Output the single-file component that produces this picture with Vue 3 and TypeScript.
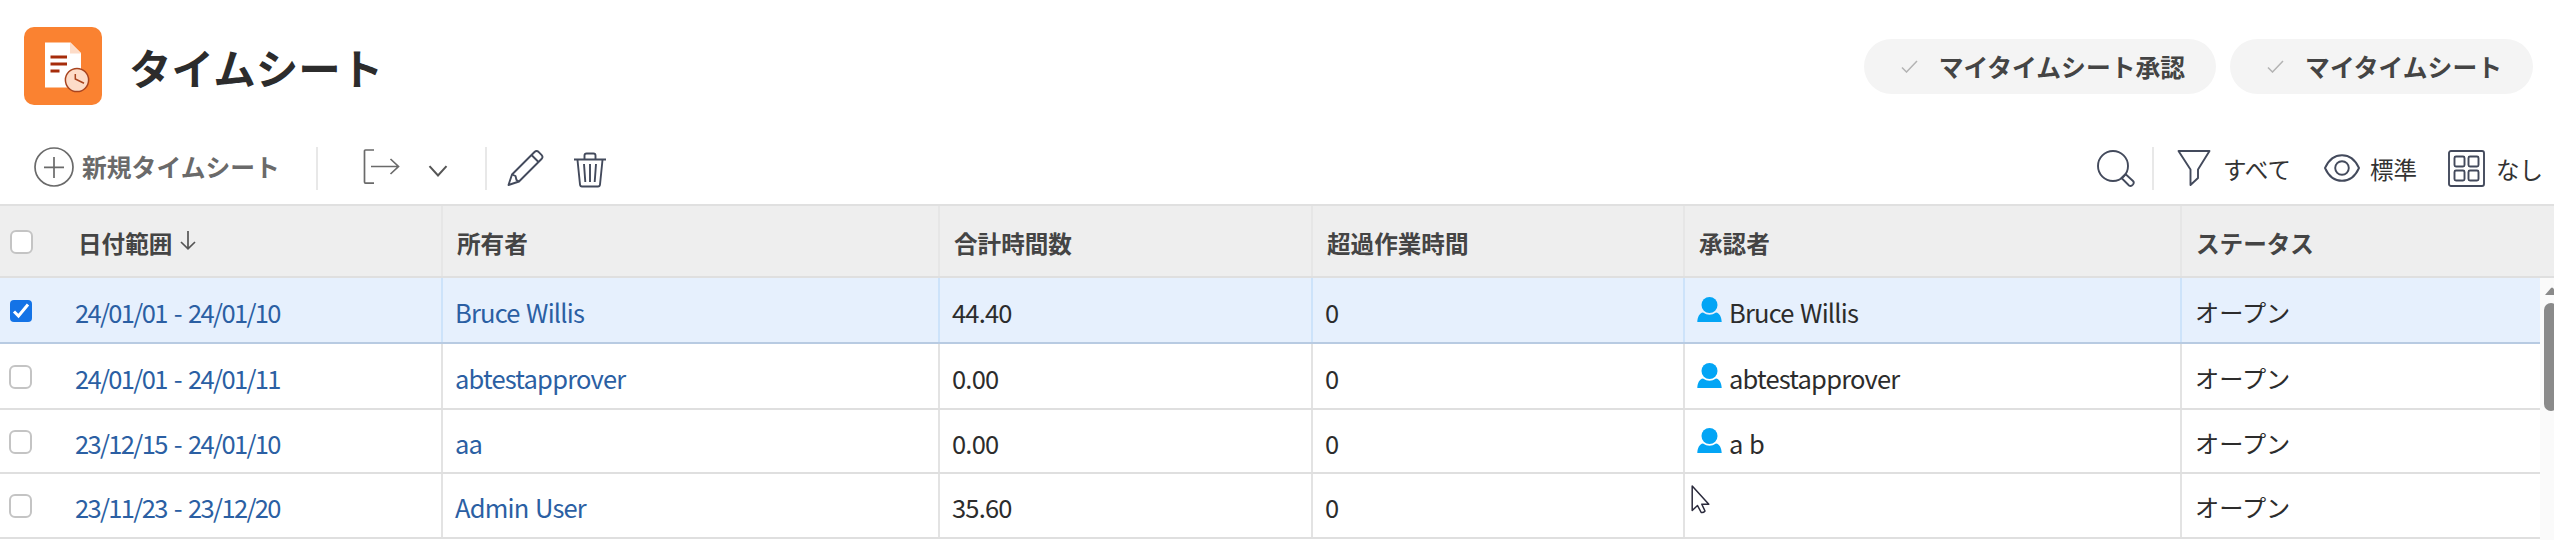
<script setup lang="ts">
interface Sheet {
  range: string
  owner: string
  hours: string
  overtime: string
  approver: string
  status: string
  selected: boolean
}

const columns: string[] = ['所有者', '合計時間数', '超過作業時間', '承認者', 'ステータス']
const filters: string[] = ['マイタイムシート承認', 'マイタイムシート']

const sheets: Sheet[] = [
  { range: '24/01/01 - 24/01/10', owner: 'Bruce Willis', hours: '44.40', overtime: '0', approver: 'Bruce Willis', status: 'オープン', selected: true },
  { range: '24/01/01 - 24/01/11', owner: 'abtestapprover', hours: '0.00', overtime: '0', approver: 'abtestapprover', status: 'オープン', selected: false },
  { range: '23/12/15 - 24/01/10', owner: 'aa', hours: '0.00', overtime: '0', approver: 'a b', status: 'オープン', selected: false },
  { range: '23/11/23 - 23/12/20', owner: 'Admin User', hours: '35.60', overtime: '0', approver: '', status: 'オープン', selected: false },
]
</script>

<template>
  <main class="page">
    <header class="title-bar">
      <svg class="app-icon" width="78" height="78" viewBox="0 0 78 78">
        <rect width="78" height="78" rx="10" fill="#fa8231" />
        <path d="M21 15.500H46.500L57 26V60.500H21Z" fill="#fff" />
        <path d="M46 15.500L57 26.500H46Z" fill="#fddcc8" />
        <path d="M26.500 30H43M26.500 37H43M26.500 44H35.500" stroke="#a62c0b" stroke-width="3.200" />
        <circle cx="53" cy="53" r="11.600" fill="#fddcc8" stroke="#a8441f" stroke-width="1.500" />
        <path d="M51.300 47V52L60 56.200" fill="none" stroke="#a8441f" stroke-width="1.500" />
      </svg>
      <h1>タイムシート</h1>
      <nav class="pills">
        <button v-for="name in filters" :key="name" class="pill">
          <svg width="17" height="13" viewBox="0 0 17 13"><path d="M1 7.500L5.500 12L16 1" fill="none" stroke="#b3b3b3" stroke-width="1.500" /></svg>
          <span>{{ name }}</span>
        </button>
      </nav>
    </header>

    <section class="toolbar">
      <svg class="plus" width="40" height="40" viewBox="0 0 40 40" fill="none" stroke="#6a6a6a" stroke-width="1.700">
        <circle cx="20" cy="20" r="19" />
        <path d="M10 20.300H30M20 10V31" />
      </svg>
      <span class="new-label">新規タイムシート</span>
      <i class="rule rule-a"></i>
      <svg class="export" width="38" height="38" viewBox="0 0 38 38" fill="none" stroke="#6a6a6a" stroke-width="1.700">
        <path d="M11 2H2.500Q1.500 2 1.500 3V34Q1.500 35.200 2.500 35.200H11" />
        <path d="M8 18.500H35.500M27.500 11L35.500 18.500L27.500 26" />
      </svg>
      <svg class="chevron" width="20" height="12" viewBox="0 0 20 12"><path d="M1.500 1.200L10 10.500L18.500 1.200" fill="none" stroke="#555" stroke-width="2" /></svg>
      <i class="rule rule-b"></i>
      <svg class="pencil" width="38" height="38" viewBox="0 0 38 38" fill="none" stroke="#434a5c" stroke-width="1.900" stroke-linejoin="round">
        <path d="M1.500 36L5 25.500L27.500 3Q29.500 1 31.500 2.800L34.500 5.800Q36.500 8 34.500 10L12 32.500Z" />
        <path d="M24.500 6L31.500 13M5 25.500L8.500 27L9.500 31L12 32.500" />
      </svg>
      <svg class="trash" width="32" height="36" viewBox="0 0 32 36" fill="none" stroke="#434a5c" stroke-width="1.900" stroke-linejoin="round">
        <path d="M0 7.500H32M10.500 7V3.500Q10.500 1.500 12.500 1.500H19.500Q21.500 1.500 21.500 3.500V7M3.500 8L6 32.500Q6.200 34.500 8 34.500H24Q25.800 34.500 26 32.500L28.500 8" />
        <path d="M10 12L11.300 30M16 12V30M22 12L20.700 30" />
      </svg>
      <div class="views">
        <svg class="search" width="38" height="38" viewBox="0 0 38 38" fill="none" stroke="#434a5c" stroke-width="1.900">
          <circle cx="16" cy="16" r="15" />
          <path d="M25.500 27L28.500 24L36 31Q37.500 32.500 36 34.500Q34 37 32 35.500L24.500 28Z" />
        </svg>
        <i class="rule rule-c"></i>
        <svg class="funnel" width="34" height="38" viewBox="0 0 34 38" fill="none" stroke="#434a5c" stroke-width="1.900" stroke-linejoin="round">
          <path d="M1.500 2H32.500L21 20.500V29L13.500 36V20.500Z" />
        </svg>
        <span class="view-label all">すべて</span>
        <svg class="eye" width="36" height="28" viewBox="0 0 36 28" fill="none" stroke="#434a5c" stroke-width="1.900">
          <path d="M1 14C5 5 11 1.200 18 1.200S31 5 35 14C31 23 25 26.800 18 26.800S5 23 1 14Z" />
          <circle cx="18" cy="14" r="6.800" />
        </svg>
        <span class="view-label standard">標準</span>
        <svg class="grid-icon" width="37" height="37" viewBox="0 0 37 37" fill="none" stroke="#434a5c" stroke-width="1.900">
          <rect x="1" y="1" width="35" height="35" rx="2" />
          <rect x="6.500" y="6.500" width="10" height="10" rx="1.500" />
          <rect x="20.500" y="6.500" width="10" height="10" rx="1.500" />
          <rect x="6.500" y="20.500" width="10" height="10" rx="1.500" />
          <rect x="20.500" y="20.500" width="10" height="10" rx="1.500" />
        </svg>
        <span class="view-label none">なし</span>
      </div>
    </section>

    <section class="table">
      <div class="row head">
        <div class="cell check"><span class="box"></span></div>
        <div class="cell date">
          日付範囲
          <svg width="16" height="19" viewBox="0 0 16 19"><path d="M8 0V17.500M1 11L8 17.800L15 11" fill="none" stroke="#555" stroke-width="1.700" /></svg>
        </div>
        <div v-for="column in columns" :key="column" class="cell">{{ column }}</div>
      </div>
      <div class="body">
        <div class="rows">
          <div v-for="sheet in sheets" :key="sheet.range" class="row" :class="{ selected: sheet.selected }">
            <div class="cell check">
              <svg v-if="sheet.selected" class="ticked" width="22" height="22" viewBox="0 0 22 22">
                <rect width="22" height="22" rx="4" fill="#1473e6" />
                <path d="M4 11.500L8.500 16L18 4.500" fill="none" stroke="#fff" stroke-width="3" />
              </svg>
              <span v-else class="box"></span>
            </div>
            <div class="cell date link">{{ sheet.range }}</div>
            <div class="cell link">{{ sheet.owner }}</div>
            <div class="cell">{{ sheet.hours }}</div>
            <div class="cell">{{ sheet.overtime }}</div>
            <div class="cell approver">
              <svg v-if="sheet.approver" width="25" height="26" viewBox="0 0 25 26" fill="#03a5f5">
                <circle cx="12.500" cy="8" r="8" />
                <path d="M0.300 25C0.500 20 2.500 16 6 15.500Q12.500 20 19 15.500C22.500 16 24.500 20 24.700 25Z" />
              </svg>
              <span>{{ sheet.approver }}</span>
            </div>
            <div class="cell status">{{ sheet.status }}</div>
          </div>
        </div>
        <div class="scrollbar">
          <svg width="14" height="8" viewBox="0 0 14 8"><path d="M0 8L6 1Q7 0 8 1L14 8Z" fill="#8a8a8a" /></svg>
          <div class="thumb"></div>
        </div>
      </div>
    </section>

    <svg class="pointer" width="20" height="30" viewBox="0 0 20 30">
      <path d="M1.200 1V25.500L6.500 20.500L10.200 27.500Q12.500 28 14 26L10.800 19.200H17.800Z" fill="#fff" stroke="#2a2a3c" stroke-width="1.500" stroke-linejoin="round" />
    </svg>
  </main>
</template>

<style>
body { overflow: hidden; }
</style>

<style scoped>
.page {
  position: relative;
  width: 2554px;
  height: 540px;
  overflow: hidden;
  background: #fff;
  color: #2c2c2c;
  font-family: "Noto Sans CJK JP", "Noto Sans", sans-serif;
}
svg { display: block; flex: none; }
.title-bar {
  display: flex;
  height: 132px;
  padding: 0 21px 0 24px;
  align-items: center;
  box-sizing: border-box;
}
h1 {
  margin: 1px 0 0 27px;
  font-size: 42.5px;
  line-height: 60px;
  font-weight: 700;
  color: #2c2c2c;
}
.pills { display: flex; gap: 14px; margin-left: auto; }
.pill {
  display: flex;
  align-items: center;
  height: 55px;
  padding: 0 31px 0 37px;
  border: 0;
  border-radius: 28px;
  background: #f4f4f4;
  font: 700 24.8px/36px "Noto Sans CJK JP", sans-serif;
  color: #444;
}
.pill span { margin-left: 21px; }
.toolbar { display: flex; align-items: flex-start; height: 72px; }
.plus { margin: 15px 0 0 34px; }
.new-label {
  width: 197px;
  margin: 16px 0 0 8px;
  font-size: 24.8px;
  line-height: 36px;
  white-space: nowrap;
  font-weight: 700;
  color: #6a6a6a;
}
.rule { flex: none; width: 2px; height: 43px; margin-top: 15px; background: #e8e8e8; }
.rule-a { margin-left: 37px; }
.export { margin: 16px 0 0 45px; }
.chevron { margin: 33px 0 0 27px; }
.rule-b { margin-left: 37px; }
.pencil { margin: 17px 0 0 20px; }
.trash { margin: 20px 0 0 29px; }
.views { display: flex; align-items: flex-start; margin: 0 0 0 auto; width: 457px; }
.search { margin-top: 18px; }
.rule-c { margin-left: 17px; }
.funnel { margin: 17px 0 0 23px; }
.view-label { font-size: 23.5px; line-height: 36px; margin-top: 19px; white-space: nowrap; color: #333; }
.all { width: 70px; margin-left: 12px; }
.eye { margin: 22px 0 0 31px; }
.standard { width: 48px; margin-left: 10px; }
.grid-icon { margin: 18px 0 0 30px; }
.none { margin-left: 11px; }
.row {
  display: grid;
  grid-template-columns: 42px 399px 497px 373px 372px 497px 1fr;
  height: 65px;
  box-sizing: border-box;
  border-bottom: 2px solid #dfdfdf;
}
.rows .row:nth-child(2) { height: 66px; }
.rows .row:nth-child(3) { height: 64px; }
.cell {
  display: flex;
  align-items: center;
  padding-left: 12px;
  border-left: 2px solid #e3e3e3;
  box-sizing: border-box;
  font-size: 25.5px;
  line-height: 36px;
  letter-spacing: -0.8px;
  word-spacing: 1.5px;
  white-space: nowrap;
}
.cell.check { padding: 0 0 0 9px; border: 0; }
.cell.date { padding-left: 33px; border: 0; letter-spacing: -1.65px; word-spacing: 3px; }
.box {
  width: 23px;
  height: 24px;
  box-sizing: border-box;
  border: 2px solid #c4c4c4;
  border-radius: 6px;
  background: #fff;
}
.head {
  height: 74px;
  border-top: 2px solid #e0e0e0;
  border-bottom: 2px solid #dfdfdf;
  background: #eee;
}
.head .cell { padding: 3px 0 0 14px; border-color: #e6e6e6; font-size: 23.6px; font-weight: 700; letter-spacing: 0; color: #444; }
.head .cell.date { padding-left: 36px; gap: 8px; letter-spacing: 0; word-spacing: 0; }
.head .cell.date svg { margin-top: -4px; }
.head .cell.check { padding: 2px 0 0 10px; }
.body { display: flex; height: 262px; }
.rows { width: 2540px; flex: none; }
.rows .cell { padding-top: 3px; }
.rows .cell.check { padding: 1px 0 0 9px; }
.rows .row.selected { height: 66px; border-bottom-color: #b8cbe2; background: #e6f0fd; }
.selected .cell { border-color: #cde3fa; }
.link { color: #2b5fa3; }
.ticked { margin-left: 1px; }
.approver { gap: 7px; }
.approver svg { margin-top: -3px; }
.cell.status { padding-left: 13px; font-size: 24.2px; letter-spacing: 0; }
.scrollbar { width: 14px; background: #fafafa; overflow: hidden; }
.scrollbar svg { margin: 9px 0 0 5px; }
.thumb { width: 14px; height: 108px; margin: 8px 0 0 4px; border-radius: 7px; background: #8a8a8a; }
.pointer { position: absolute; left: 1691px; top: 485px; }
</style>
